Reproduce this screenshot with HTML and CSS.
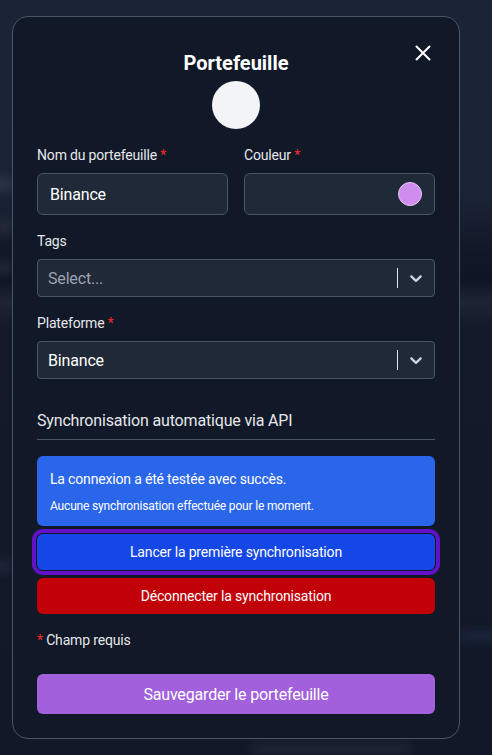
FILE: index.html
```html
<!DOCTYPE html>
<html lang="fr">
<head>
<meta charset="utf-8">
<title>Portefeuille</title>
<link rel="stylesheet" href="styles.css">
</head>
<body>
<div class="backdrop" aria-hidden="true">
  <span class="blob blob-a"></span>
  <span class="blob blob-b"></span>
  <span class="blob blob-c"></span>
  <span class="blob blob-d"></span>
  <span class="blob blob-e"></span>
  <span class="blob blob-f"></span>
</div>
<div class="modal">
  <button class="close" type="button" aria-label="Fermer">
    <svg width="16" height="16" viewBox="0 0 16 16"><path d="M1.5 1.5 L14.5 14.5 M14.5 1.5 L1.5 14.5" stroke="#ffffff" stroke-width="2" stroke-linecap="round" fill="none"/></svg>
  </button>
  <h2 class="title">Portefeuille</h2>
  <div class="avatar"></div>

  <div class="row">
    <div class="field">
      <label class="label">Nom du portefeuille <span class="req">*</span></label>
      <div class="input">Binance</div>
    </div>
    <div class="field">
      <label class="label">Couleur <span class="req">*</span></label>
      <div class="input input-color"><span class="swatch"></span></div>
    </div>
  </div>

  <div class="field">
    <label class="label">Tags</label>
    <div class="select">
      <span class="select-value placeholder">Select...</span>
      <span class="select-sep"></span>
      <span class="select-ind">
        <svg width="20" height="20" viewBox="0 0 20 20"><path fill="#d1d5db" d="M4.516 7.548c0.436-0.446 1.043-0.481 1.576 0l3.908 3.747 3.908-3.747c0.533-0.481 1.141-0.446 1.574 0 0.436 0.445 0.408 1.197 0 1.615-0.406 0.418-4.695 4.502-4.695 4.502-0.217 0.223-0.502 0.335-0.787 0.335s-0.57-0.112-0.789-0.335c0 0-4.287-4.084-4.695-4.502s-0.436-1.170 0-1.615z"/></svg>
      </span>
    </div>
  </div>

  <div class="field">
    <label class="label">Plateforme <span class="req">*</span></label>
    <div class="select">
      <span class="select-value">Binance</span>
      <span class="select-sep"></span>
      <span class="select-ind">
        <svg width="20" height="20" viewBox="0 0 20 20"><path fill="#d1d5db" d="M4.516 7.548c0.436-0.446 1.043-0.481 1.576 0l3.908 3.747 3.908-3.747c0.533-0.481 1.141-0.446 1.574 0 0.436 0.445 0.408 1.197 0 1.615-0.406 0.418-4.695 4.502-4.695 4.502-0.217 0.223-0.502 0.335-0.787 0.335s-0.57-0.112-0.789-0.335c0 0-4.287-4.084-4.695-4.502s-0.436-1.170 0-1.615z"/></svg>
      </span>
    </div>
  </div>

  <h3 class="section">Synchronisation automatique via API</h3>

  <div class="alert">
    <p class="alert-main">La connexion a été testée avec succès.</p>
    <p class="alert-sub">Aucune synchronisation effectuée pour le moment.</p>
  </div>
  <button class="btn btn-blue" type="button">Lancer la première synchronisation</button>
  <button class="btn btn-red" type="button">Déconnecter la synchronisation</button>

  <p class="hint"><span class="req">*</span> Champ requis</p>

  <button class="btn btn-save" type="button">Sauvegarder le portefeuille</button>
</div>
</body>
</html>
```

FILE: styles.css
```css
* { box-sizing: border-box; }

html, body {
  margin: 0;
  height: 100%;
}

body {
  font-family: Roboto, "Liberation Sans", sans-serif;
  letter-spacing: -0.17px;
  color: #e5e7eb;
  background: linear-gradient(180deg, #1b2336 0%, #1a2235 26%, #111726 34%, #0f1524 37%, #1d2434 40%, #131a2a 43%, #121827 100%);
  overflow: hidden;
  position: relative;
}

.backdrop {
  position: absolute;
  inset: 0;
  pointer-events: none;
}

.blob {
  position: absolute;
  border-radius: 10px;
  filter: blur(6px);
  background: rgba(148, 163, 184, 0.18);
}
.blob-a { left: -10px; top: 178px; width: 24px; height: 12px; }
.blob-b { left: -6px; top: 220px; width: 20px; height: 14px; background: rgba(148,163,184,0.12); }
.blob-c { left: -4px; top: 262px; width: 16px; height: 12px; }
.blob-d { left: -8px; top: 562px; width: 20px; height: 8px; background: rgba(129,120,200,0.22); }
.blob-e { left: 250px; top: 743px; width: 160px; height: 12px; background: rgba(148,163,184,0.1); }
.blob-f { left: 460px; top: 633px; width: 40px; height: 6px; background: rgba(96,125,200,0.25); }

.modal {
  position: relative;
  width: 448px;
  margin: 16px 0 0 12px;
  background: #111827;
  border: 1px solid #4b5563;
  border-radius: 16px;
  padding: 32px 24px 24px;
  display: flex;
  flex-direction: column;
}

.close {
  position: absolute;
  top: 28px;
  right: 28px;
  width: 16px;
  height: 16px;
  padding: 0;
  border: 0;
  background: none;
  display: flex;
}

.title {
  margin: 0 0 4px;
  text-align: center;
  font-size: 20px;
  line-height: 28px;
  font-weight: 700;
  letter-spacing: 0;
  color: #ffffff;
}

.avatar {
  width: 48px;
  height: 48px;
  border-radius: 50%;
  background: #f3f4f6;
  align-self: center;
  margin-bottom: 16px;
}

.row {
  display: grid;
  grid-template-columns: 1fr 1fr;
  gap: 16px;
}

.field {
  display: flex;
  flex-direction: column;
  margin-bottom: 16px;
}

.label {
  font-size: 14px;
  line-height: 20px;
  color: #e5e7eb;
  margin-bottom: 8px;
}

.req { color: #ef2b2b; }

.input {
  height: 42px;
  background: #1f2937;
  border: 1px solid #4b5563;
  border-radius: 6px;
  padding: 0 12px;
  display: flex;
  align-items: center;
  font-size: 16px;
  color: #ffffff;
}

.input-color { justify-content: flex-end; }

.swatch {
  width: 24px;
  height: 24px;
  border-radius: 50%;
  background: #cf8eee;
  border: 1px solid #e2c6f2;
}

.select {
  height: 38px;
  background: #1f2937;
  border: 1px solid #4b5563;
  border-radius: 4px;
  display: flex;
  align-items: center;
}

.select-value {
  flex: 1;
  padding: 0 10px;
  font-size: 16px;
  color: #ffffff;
}
.select-value.placeholder { color: #9ca3af; }

.select-sep {
  width: 1px;
  align-self: stretch;
  margin: 8px 0;
  background: #e5e7eb;
}

.select-ind {
  padding: 0 8px;
  display: flex;
}

.section {
  margin: 14px 0 16px;
  padding-bottom: 6px;
  border-bottom: 1px solid #4b5563;
  font-size: 16px;
  line-height: 24px;
  font-weight: 400;
  color: #e5e7eb;
}

.alert {
  background: #2a66e9;
  border-radius: 6px;
  padding: 13px 13px 12px;
  color: #ffffff;
}
.alert-main {
  margin: 0;
  font-size: 14px;
  line-height: 20px;
}
.alert-sub {
  margin: 9px 0 0;
  font-size: 12px;
  line-height: 16px;
}

.btn {
  width: 100%;
  border: 0;
  border-radius: 6px;
  font-family: inherit;
  letter-spacing: inherit;
  color: #ffffff;
  font-size: 14px;
  height: 36px;
  padding: 0;
}

.btn-blue {
  margin-top: 8px;
  background: #1447e6;
  outline: 4px solid #6212c6;
  outline-offset: 1px;
}

.btn-red {
  margin-top: 8px;
  background: #c10007;
}

.hint {
  margin: 16px 0 24px;
  font-size: 14px;
  line-height: 20px;
  color: #e5e7eb;
}

.btn-save {
  height: 40px;
  font-size: 16px;
  background: #a260dc;
}
```
